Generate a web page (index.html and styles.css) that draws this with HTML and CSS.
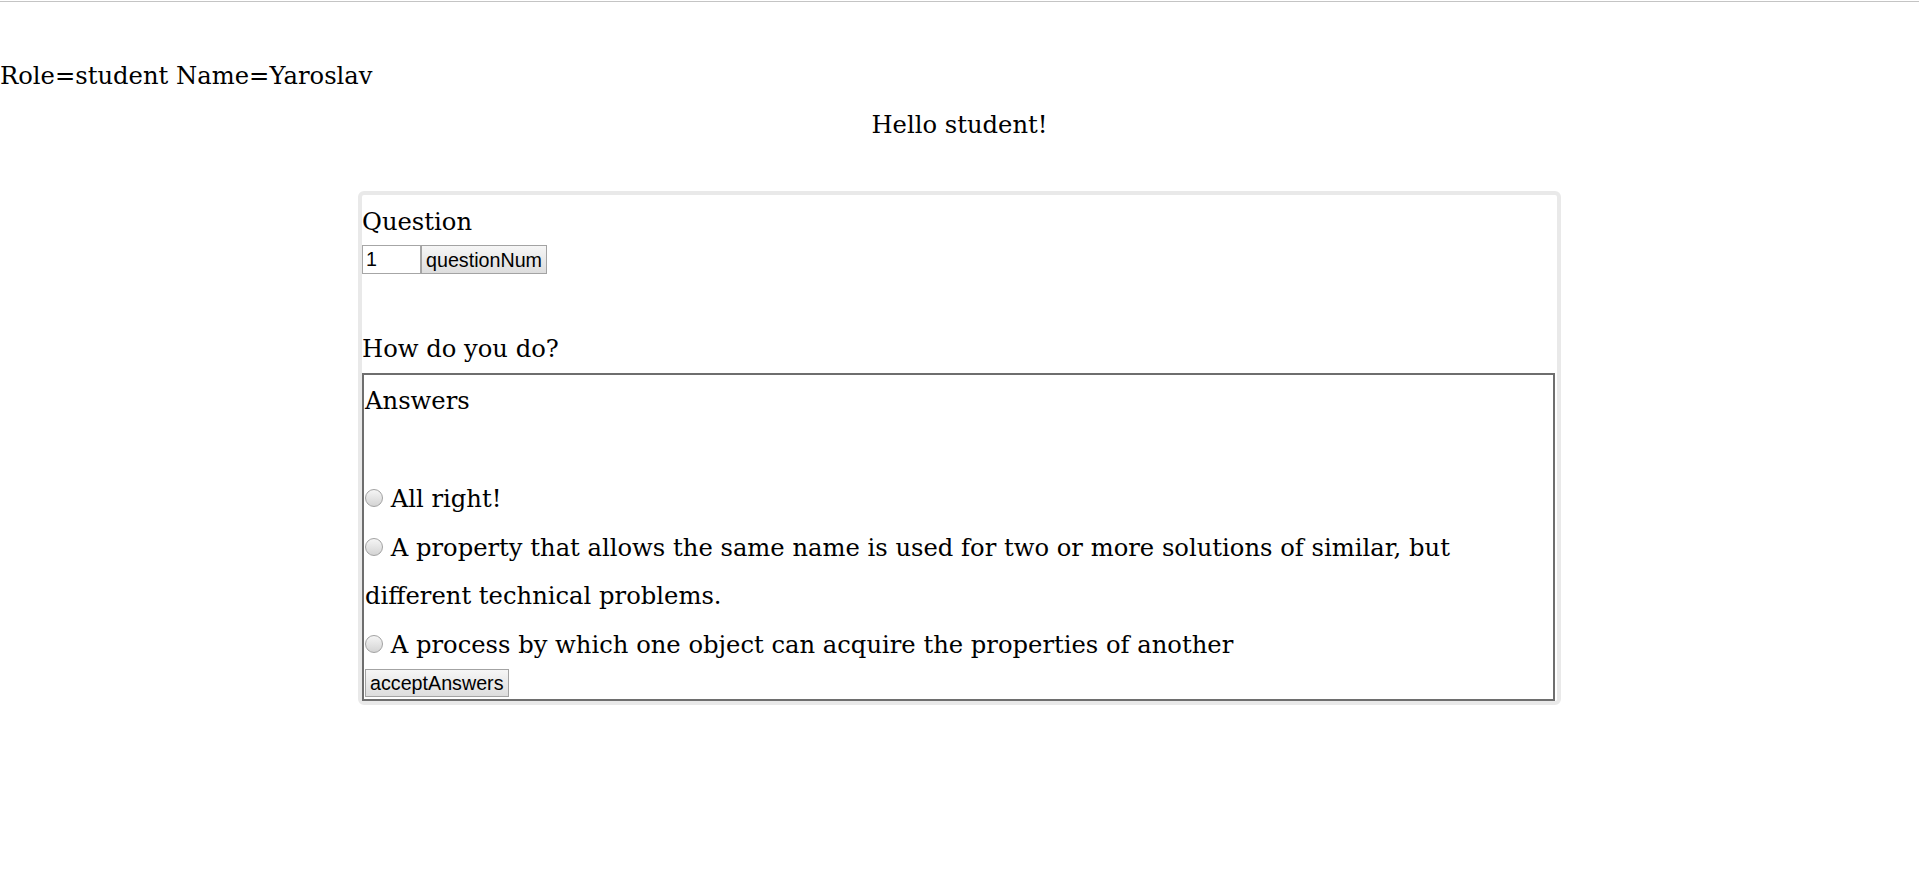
FILE: index.html
```html
<!DOCTYPE html>
<html lang="en">
<head>
<meta charset="utf-8">
<title>Test</title>
<link rel="stylesheet" href="styles.css">
</head>
<body>
<div class="topline"></div>
<div class="userinfo">Role=student Name=Yaroslav</div>
<div class="greeting">Hello student!</div>
<div class="card">
  <div class="q-title">Question</div>
  <div class="q-controls">
    <input class="q-num" type="text" value="1">
    <button class="btn" type="button">questionNum</button>
  </div>
  <div class="q-text">How do you do?</div>
  <div class="answers">
    <div class="answers-title">Answers</div>
    <div class="answer-list">
      <label class="answer"><input class="radio" type="radio" name="ans"> All right!</label>
      <label class="answer"><input class="radio" type="radio" name="ans"> A property that allows the same name is used for two or more solutions of similar, but<br>different technical problems.</label>
      <label class="answer"><input class="radio" type="radio" name="ans"> A process by which one object can acquire the properties of another</label>
    </div>
    <button class="btn btn-accept" type="button">acceptAnswers</button>
  </div>
</div>
</body>
</html>
```

FILE: styles.css
```css
html, body {
  margin: 0;
  padding: 0;
  background: #ffffff;
}

body {
  font-family: "DejaVu Serif", "Liberation Serif", serif;
  font-size: 24.25px;
  line-height: 28px;
  color: #000000;
}

.topline {
  margin-top: 1px;
  height: 1px;
  background: #c4c4c4;
}

.userinfo {
  margin-top: 60px;
}

.greeting {
  margin-top: 21px;
  text-align: center;
}

.card {
  width: 1195px;
  margin: 52px auto 0;
  padding-top: 13px;
  border: 4px solid #e9e9e9;
  border-radius: 6px;
  background: #ffffff;
}

.q-controls {
  display: flex;
  margin-top: 9px;
  height: 29px;
}

.q-num {
  box-sizing: border-box;
  width: 59px;
  height: 29px;
  margin: 0;
  padding: 0 3px;
  border: 1px solid #a6a6a6;
  font-family: "Liberation Sans", Arial, sans-serif;
  font-size: 19.7px;
  color: #000000;
  background: #ffffff;
}

.btn {
  box-sizing: border-box;
  height: 29px;
  margin: 0;
  padding: 0 4px;
  border: 1px solid #a3a3a3;
  border-radius: 0;
  background: linear-gradient(#f6f6f6, #dddddd);
  font-family: "Liberation Sans", Arial, sans-serif;
  font-size: 19.7px;
  line-height: 26px;
  color: #000000;
}

.q-text {
  margin-top: 61px;
}

.answers {
  margin: 10px 2px 0 0;
  padding: 12px 1px 2px;
  border: 2px solid #6e6e6e;
}

.answer-list {
  margin-top: 60px;
}

.answer {
  display: block;
  line-height: 48.5px;
}

.radio {
  appearance: none;
  -webkit-appearance: none;
  box-sizing: border-box;
  width: 18px;
  height: 18px;
  margin: 0;
  border: 1px solid #a2a2a2;
  border-radius: 50%;
  background: linear-gradient(#f5f5f5, #d4d4d4);
  vertical-align: baseline;
}

.btn-accept {
  display: block;
  height: 28px;
}
```
